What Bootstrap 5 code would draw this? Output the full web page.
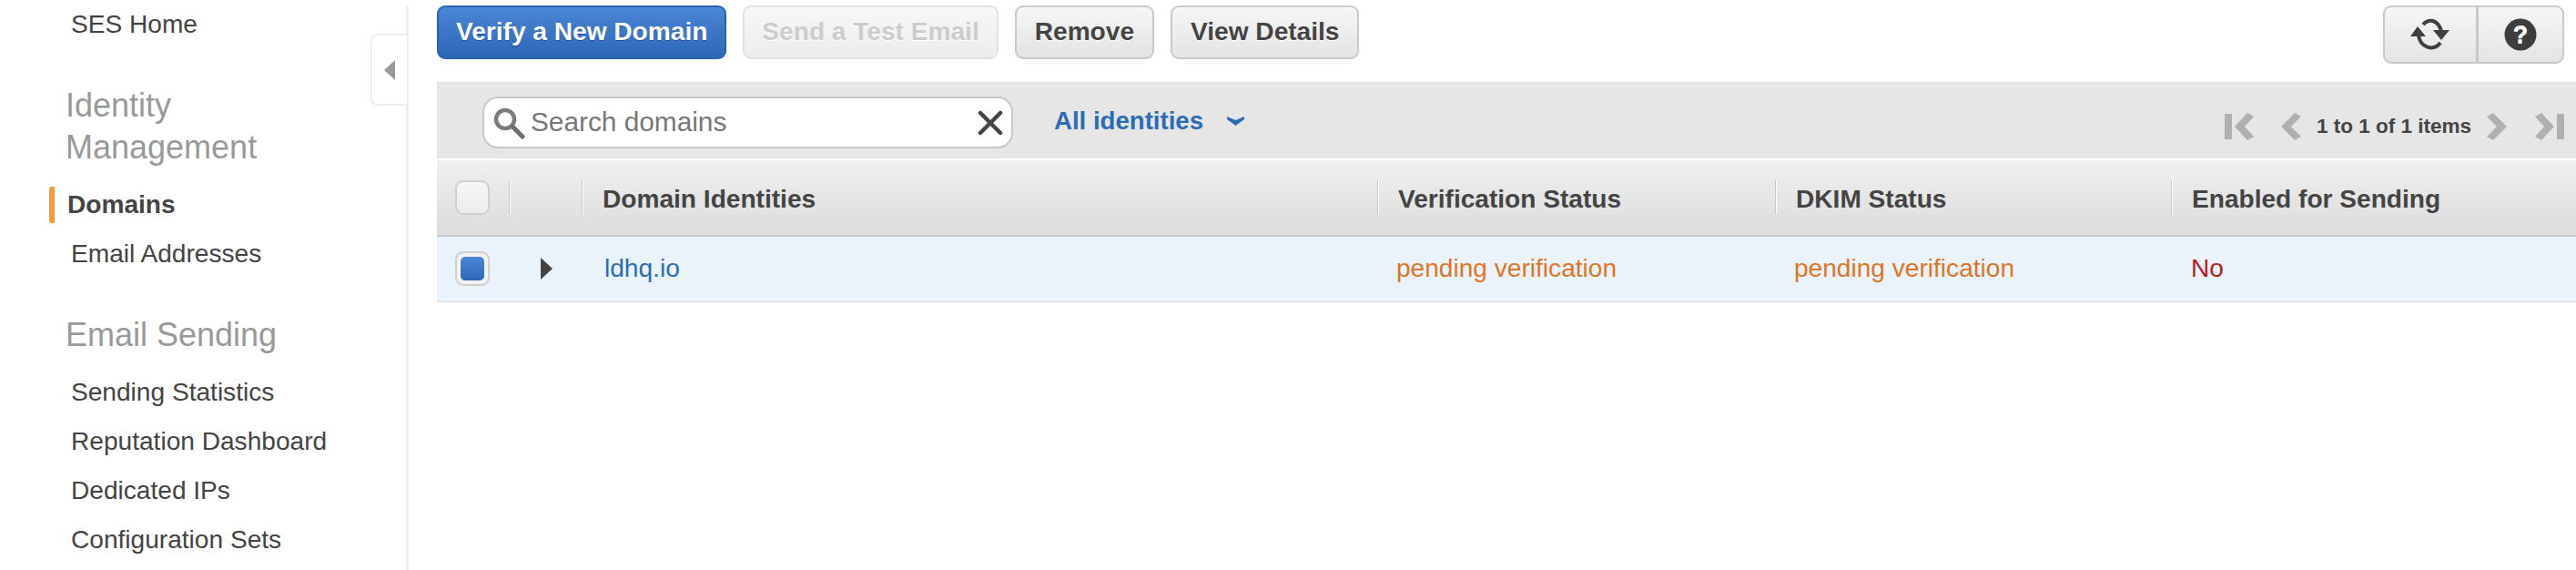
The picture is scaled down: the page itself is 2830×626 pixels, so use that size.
<!DOCTYPE html>
<html lang="en">
  <head>
    <meta charset="UTF-8" />
    <meta name="viewport" content="width=device-width, initial-scale=1.0" />
    <link href="https://cdn.jsdelivr.net/npm/bootstrap@5.3.0/dist/css/bootstrap.min.css" rel="stylesheet" />
    <title>SES Domains</title>
    <style>
      html, body {
        height: 626px;
        overflow: hidden;
        background: #fff;
      }
      body, .btn, .table {
        font-family: "Liberation Sans", Arial, sans-serif;
        font-size: 28.1px;
        color: #444;
      }
      .shell {
        height: 626px;
      }

      /* sidebar */
      .side {
        width: 449px;
        flex: none;
        margin-top: 6px;
        border-right: 3px solid #eee;
        position: relative;
      }
      .side-list {
        margin-top: -6px;
      }
      .side-link {
        display: block;
        height: 54px;
        line-height: 54px;
        padding-left: 78px;
        color: #444;
        text-decoration: none;
      }
      .side-active {
        padding-left: 74px;
        font-weight: 700;
        position: relative;
      }
      .side-active::before {
        content: "";
        position: absolute;
        left: 54px;
        top: 7px;
        width: 6px;
        height: 40px;
        background: #f09d3a;
        border-radius: 3px 0 0 3px;
      }
      .side-head {
        margin: 39px 0 13px 72px;
        width: 300px;
        font-size: 36px;
        line-height: 46px;
        font-weight: 400;
        color: #999;
      }
      .side-toggle {
        position: absolute;
        left: 407px;
        top: 31px;
        width: 40px;
        height: 79px;
        background: #fff;
        border: 2px solid #eee;
        border-right: 0;
        border-radius: 8px 0 0 8px;
        display: flex;
        align-items: center;
        justify-content: center;
      }

      /* toolbar */
      .work {
        margin-left: 31px;
        padding-top: 6px;
        min-width: 0;
      }
      .tools {
        padding-right: 13px;
        margin-bottom: 20px;
      }
      .tool-row {
        gap: 18px;
      }
      .aws-btn {
        height: 59px;
        padding: 0 20px;
        font-size: 28.1px;
        font-weight: 700;
        color: #444;
        background: linear-gradient(#f6f6f6, #e4e4e4);
        border: 2px solid #c9c9c9;
        border-radius: 9px;
        text-shadow: 0 1px 0 #fff;
      }
      .aws-tight {
        padding: 0 19px;
      }
      .aws-primary {
        color: #fff;
        background: linear-gradient(#4a87d6, #2e66b6);
        border-color: #2a63b2;
        text-shadow: 0 1px 0 #1f4f96;
      }
      .aws-btn:disabled {
        color: #ccc;
        background: linear-gradient(#f8f8f8, #ececec);
        border-color: #e2e2e2;
        opacity: 1;
      }
      .aws-icon {
        height: 64px;
        padding: 0;
        display: flex;
        align-items: center;
        justify-content: center;
      }
      .icon-refresh {
        width: 104px;
      }
      .icon-help {
        width: 96px;
      }

      /* filter bar */
      .filter {
        height: 84px;
        background: #e6e6e6;
        padding-left: 50px;
        padding-right: 13px;
      }
      .search-box {
        width: 583px;
        height: 57px;
        margin-top: 5px;
        background: #fff;
        border: 2px solid #c8c8c8;
        border-radius: 17px;
        padding: 0 9px 0 9px;
        color: #777;
        font-size: 29.8px;
      }
      .search-box span {
        margin-left: 6px;
      }
      .scope {
        margin-left: 45px;
        margin-top: 2px;
        font-size: 27.6px;
        font-weight: 700;
        color: #2b6cb4;
      }
      .scope-caret {
        margin-left: 26px;
      }
      .pager {
        margin-top: 14px;
      }
      .pager-text {
        font-size: 22.5px;
        font-weight: 700;
        margin: 0 17px;
        color: #444;
      }
      .pager-first {
        margin-right: 30px;
      }
      .pager-next {
        margin-right: 31px;
      }

      /* table */
      .dom-table {
        table-layout: fixed;
        width: 2350px;
        margin: 2px 0 0;
        border-collapse: separate;
        border-spacing: 0;
      }
      .dom-table th, .dom-table td {
        padding: 0 0 0 23px;
        border: 0;
        vertical-align: middle;
        white-space: nowrap;
      }
      .dom-table thead th {
        height: 84px;
        padding-top: 4px;
        color: #444;
        font-weight: 700;
        background: linear-gradient(#f0f0f0, #dcdcdc);
        border-bottom: 2px solid #c9c9ce;
        position: relative;
      }
      .dom-table thead th + th::before {
        content: "";
        position: absolute;
        left: 0;
        top: 22px;
        height: 37px;
        width: 2px;
        background: #fff;
        border-left: 1px solid #c6c6c6;
      }
      .dom-table tbody td {
        height: 72px;
        background: #eaf2fc;
        border-bottom: 2px solid #dfe3e8;
        color: #444;
        box-shadow: none;
      }
      .dom-table thead .box-cell, .dom-table tbody .box-cell {
        padding-left: 20px;
        padding-top: 0;
      }
      .tick {
        display: block;
        width: 38px;
        height: 38px;
        border: 2px solid #cfcfcf;
        border-radius: 9px;
        background: linear-gradient(#f6f6f6, #ececec);
      }
      .tick-on {
        background: #f2f2f2;
        padding: 4px;
      }
      .tick-on i {
        display: block;
        height: 26px;
        border-radius: 5px;
        background: linear-gradient(#4a87d6, #2e66b6);
      }
      .dom-table tbody .dom-cell {
        padding-left: 25px;
      }
      .dom-link {
        color: #2b6cb4;
        text-decoration: none;
      }
      .dom-table tbody .st-pending {
        color: #dd7626;
        padding-left: 21px;
      }
      .dom-table tbody .st-no {
        color: #b81c1c;
        padding-left: 22px;
      }
      .dom-table tbody .exp-cell {
        padding-left: 34px;
      }
    </style>
  </head>

  <body>
    <div class="shell d-flex">
      <nav class="side">
        <div class="side-list">
          <a class="side-link" href="#">SES Home</a>
          <h2 class="side-head">Identity Management</h2>
          <a class="side-link side-active" href="#">Domains</a>
          <a class="side-link" href="#">Email Addresses</a>
          <h2 class="side-head">Email Sending</h2>
          <a class="side-link" href="#">Sending Statistics</a>
          <a class="side-link" href="#">Reputation Dashboard</a>
          <a class="side-link" href="#">Dedicated IPs</a>
          <a class="side-link" href="#">Configuration Sets</a>
        </div>
        <div class="side-toggle">
          <svg width="14" height="24" viewBox="0 0 14 24"><path d="M13 1V23L1 12Z" fill="#999" /></svg>
        </div>
      </nav>

      <main class="work flex-grow-1">
        <div class="tools d-flex align-items-start">
          <div class="tool-row d-flex">
            <button class="btn aws-btn aws-tight aws-primary">Verify a New Domain</button>
            <button class="btn aws-btn aws-tight" disabled>Send a Test Email</button>
            <button class="btn aws-btn">Remove</button>
            <button class="btn aws-btn">View Details</button>
          </div>
          <div class="btn-group ms-auto">
            <button class="btn aws-btn aws-icon icon-refresh" aria-label="Refresh">
              <svg width="44" height="38" viewBox="0 0 44 38" fill="none">
                <path d="M14 8C20 1 30 2 34 15" stroke="#3f3f3f" stroke-width="4" />
                <path d="M9 20C11 33 25 38 33 28" stroke="#3f3f3f" stroke-width="4" />
                <path d="M0 21H17L8 10ZM25 14H43L34 25Z" fill="#3f3f3f" />
              </svg>
            </button>
            <button class="btn aws-btn aws-icon icon-help" aria-label="Help">
              <svg width="36" height="36" viewBox="0 0 36 36">
                <circle cx="18" cy="18" r="17.5" fill="#3d3d3d" />
                <text x="18" y="27" text-anchor="middle" font-family="Liberation Sans, sans-serif" font-size="27" font-weight="700" fill="#fff">?</text>
              </svg>
            </button>
          </div>
        </div>

        <div class="filter d-flex align-items-center">
          <div class="search-box d-flex align-items-center">
            <svg width="36" height="36" viewBox="0 0 36 36" fill="none">
              <circle cx="14" cy="14" r="10" stroke="#7c7c7c" stroke-width="4.5" />
              <path d="M22 22L33 33" stroke="#6e6e6e" stroke-width="5" stroke-linecap="round" />
            </svg>
            <span>Search domains</span>
            <svg class="ms-auto" width="28" height="28" viewBox="0 0 28 28">
              <path d="M3 3L25 25M25 3L3 25" stroke="#444" stroke-width="4.5" stroke-linecap="round" />
            </svg>
          </div>
          <div class="scope d-flex align-items-center">
            All identities
            <svg class="scope-caret" width="19" height="11" viewBox="0 0 19 11"><path d="M0 1L9.5 5L19 1V4L9.5 11L0 4Z" fill="#2b6cb4" /></svg>
          </div>
          <div class="pager ms-auto d-flex align-items-center">
            <svg class="pager-first" width="32" height="30" viewBox="0 0 32 30"><path d="M0 1H8V29H0ZM32 4L22 15L32 26L25 30L11 15L25 0Z" fill="#b0b0b0" /></svg>
            <svg width="22" height="30" viewBox="0 0 22 30"><path d="M22 4L11 15L22 26L15 30L0 15L15 0Z" fill="#b0b0b0" /></svg>
            <span class="pager-text">1 to 1 of 1 items</span>
            <svg class="pager-next" width="22" height="30" viewBox="0 0 22 30"><path d="M0 4L11 15L0 26L7 30L22 15L7 0Z" fill="#b0b0b0" /></svg>
            <svg width="32" height="30" viewBox="0 0 32 30"><path d="M32 1H24V29H32ZM0 4L10 15L0 26L7 30L21 15L7 0Z" fill="#b0b0b0" /></svg>
          </div>
        </div>

        <table class="table dom-table">
          <colgroup>
            <col style="width: 79px" />
            <col style="width: 80px" />
            <col style="width: 874px" />
            <col style="width: 437px" />
            <col style="width: 435px" />
            <col style="width: 445px" />
          </colgroup>
          <thead>
            <tr>
              <th class="box-cell"><span class="tick"></span></th>
              <th></th>
              <th>Domain Identities</th>
              <th>Verification Status</th>
              <th>DKIM Status</th>
              <th>Enabled for Sending</th>
            </tr>
          </thead>
          <tbody>
            <tr>
              <td class="box-cell"><span class="tick tick-on"><i></i></span></td>
              <td class="exp-cell">
                <svg class="d-block" width="14" height="24" viewBox="0 0 14 24"><path d="M1 0L14 12L1 24Z" fill="#444" /></svg>
              </td>
              <td class="dom-cell"><a class="dom-link" href="#">ldhq.io</a></td>
              <td class="st-pending">pending verification</td>
              <td class="st-pending">pending verification</td>
              <td class="st-no">No</td>
            </tr>
          </tbody>
        </table>
      </main>
    </div>

    <script src="https://cdn.jsdelivr.net/npm/bootstrap@5.3.0/dist/js/bootstrap.bundle.min.js"></script>
  </body>
</html>
